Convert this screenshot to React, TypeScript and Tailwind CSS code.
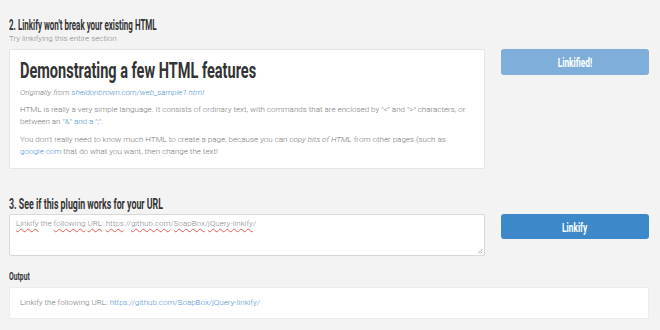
import React from 'react';

const heading = { fontFamily: 'Roboto, "Liberation Sans", sans-serif' };
const body = { fontFamily: 'Roboto, "Noto Sans", sans-serif' };

function Misspelled({ children }: { children: React.ReactNode }) {
  return <span className="underline decoration-wavy decoration-[#e05a5a] decoration-[1px] underline-offset-2">{children}</span>;
}

export default function App() {
  return (
    <div className="w-[660px] h-[330px] bg-[#f3f3f3] overflow-hidden px-[9px] text-[#333]" style={body}>
      <h2 className="pt-[15px] h-[35px] text-[14px] leading-[20px] font-bold text-[#333] whitespace-nowrap origin-left scale-x-[0.57]" style={heading}>
        2. Linkify won't break your existing HTML
      </h2>
      <p className="-mt-[1px] text-[8px] leading-[10px] text-[#888] font-light">Try linkifying this entire section</p>

      <div className="mt-[5px] flex gap-[16px]">
        <div className="w-[476px] h-[120px] bg-white border border-[#e6e6e6] rounded-[2px] px-[10px] pt-[8px] font-light">
          <h1 className="text-[22px] leading-[26px] font-bold text-[#333] whitespace-nowrap origin-left scale-x-[0.66]" style={heading}>
            Demonstrating a few HTML features
          </h1>
          <p className="mt-[4px] text-[8px] leading-[10px] italic text-[#777]">
            Originally from <a className="text-[#4d8fd0]">sheldonbrown.com/web_sample1.html</a>
          </p>
          <p className="mt-[6px] text-[8px] leading-[12px] text-[#777]">
            HTML is really a very simple language. It consists of ordinary text, with commands that are enclosed by "&lt;" and "&gt;" characters, or between an <a className="text-[#4d8fd0]">"&amp;" and a ";"</a>.
          </p>
          <p className="mt-[6px] text-[8px] leading-[12px] text-[#777]">
            You don't really need to know much HTML to create a page, because you can <em>copy bits of HTML</em> from other pages (such as <a className="text-[#4d8fd0]">google.com</a> that do what you want, then change the text!
          </p>
        </div>
        <button className="w-[148px] h-[26px] rounded-[3px] bg-[#7eaed9] text-white" style={heading}>
          <span className="inline-block text-[13px] font-bold scale-x-[0.64]">Linkified!</span>
        </button>
      </div>

      <h3 className="mt-[25px] text-[14px] leading-[20px] font-bold text-[#333] whitespace-nowrap origin-left scale-x-[0.63]" style={heading}>
        3. See if this plugin works for your URL
      </h3>
      <div className="flex gap-[16px]">
        <div className="relative w-[476px] h-[42px] bg-white border border-[#d9d9d9] rounded-[2px] px-[6px] pt-[3px] text-[8px] leading-[12px] text-[#888] font-light">
          <Misspelled>Linkify</Misspelled> the <Misspelled>following</Misspelled> <Misspelled>URL</Misspelled>: <Misspelled>https</Misspelled>://<Misspelled>github.com</Misspelled>/<Misspelled>SoapBox</Misspelled>/<Misspelled>jQuery-linkify</Misspelled>/
          <svg className="absolute right-[1px] bottom-[1px]" width="6" height="6" viewBox="0 0 6 6">
            <path d="M5.5 1 L1 5.5 M5.5 3.5 L3.5 5.5" stroke="#999" strokeWidth="0.8" />
          </svg>
        </div>
        <button className="w-[148px] h-[25px] rounded-[3px] bg-[#3d88c9] text-white" style={heading}>
          <span className="inline-block text-[13px] font-bold scale-x-[0.64]">Linkify</span>
        </button>
      </div>

      <p className="mt-[14px] text-[11px] leading-[14px] font-bold text-[#333] origin-left scale-x-[0.62]" style={heading}>Output</p>
      <div className="mt-[3px] w-[640px] h-[32px] bg-white border border-[#ececec] rounded-[2px] px-[10px] flex items-center text-[8px] text-[#777] font-light">
        Linkify the following URL:&nbsp;<a className="text-[#4d8fd0]">https://github.com/SoapBox/jQuery-linkify/</a>
      </div>
    </div>
  );
}
